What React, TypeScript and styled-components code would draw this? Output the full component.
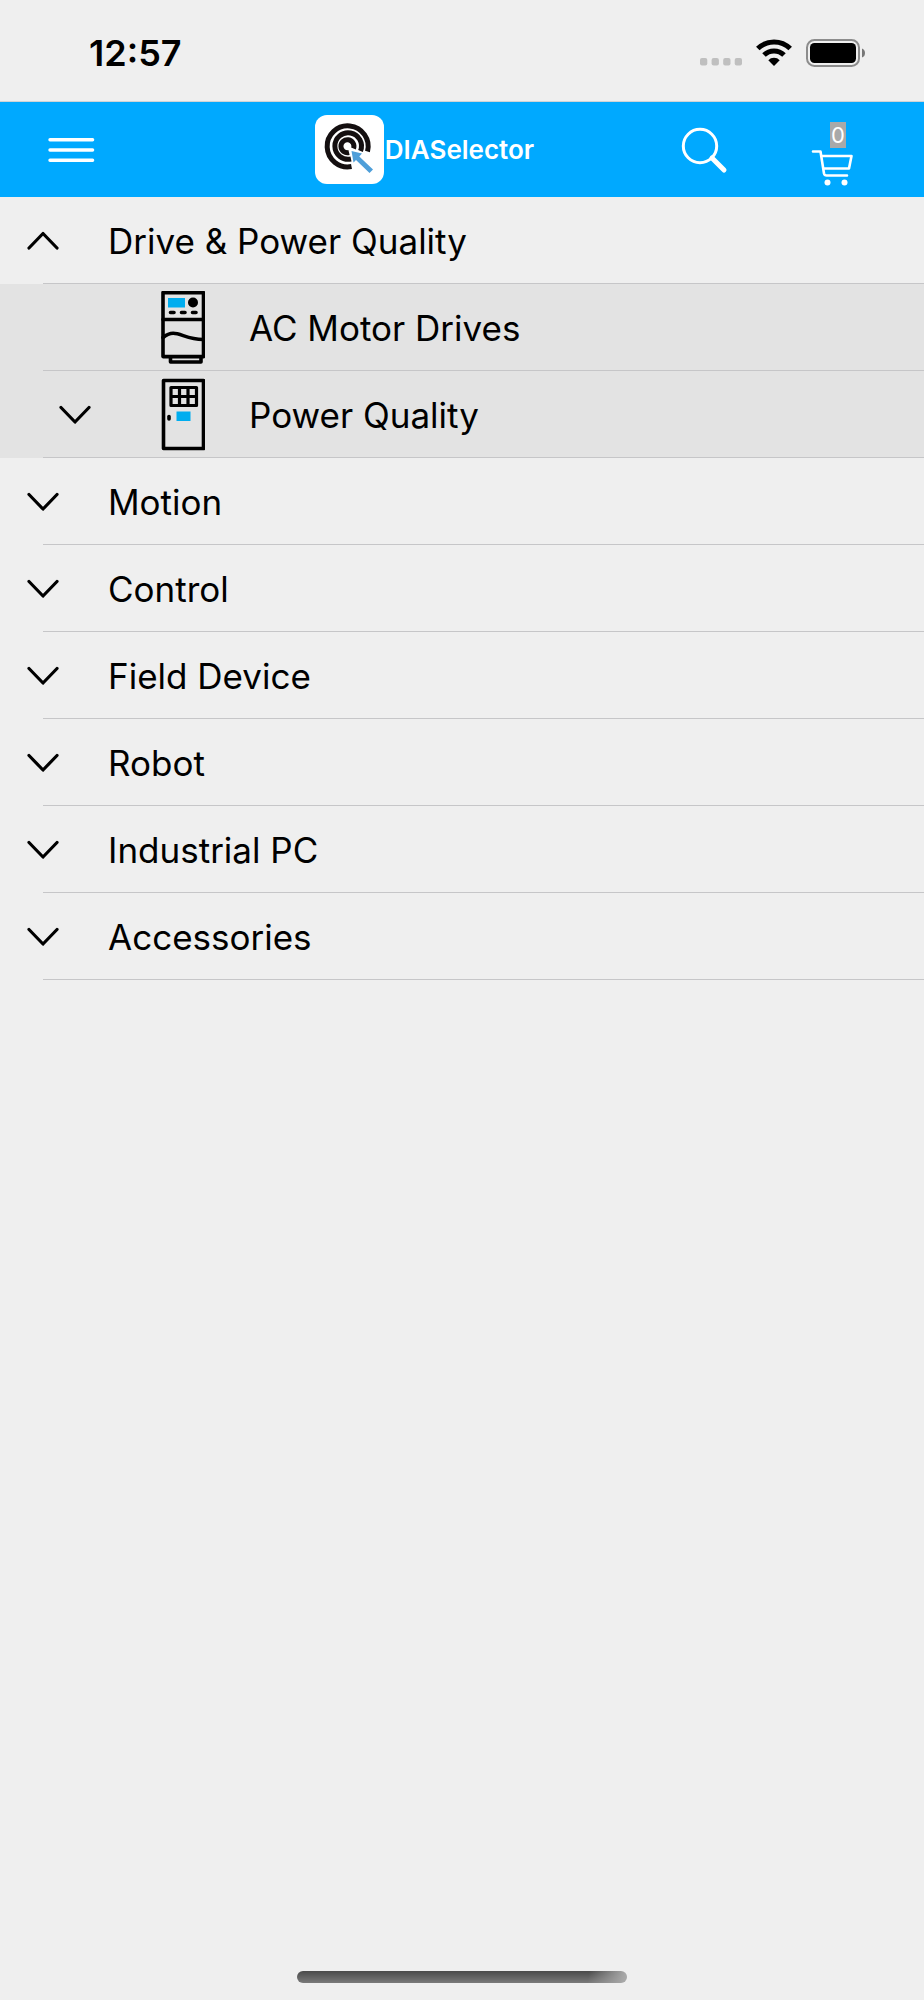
import React, { useState } from "react";
import styled, { createGlobalStyle } from "styled-components";

const GlobalStyle = createGlobalStyle`
  *, *::before, *::after { box-sizing: border-box; }
  body {
    margin: 0;
    background: #efefef;
    color: #000;
    font-family: Inter, "Liberation Sans", sans-serif;
  }
  button { font: inherit; color: inherit; }
  svg { flex: none; }
`;

const Screen = styled.div`
  min-height: 100vh;
  display: flex;
  flex-direction: column;
`;

const StatusBar = styled.div`
  height: 102px;
  padding: 0 58px 0 89px;
  border-bottom: 1px solid #cfd3d6;
  display: flex;
  align-items: center;
  justify-content: space-between;
`;

const Clock = styled.time`
  font-size: 36px;
  line-height: 44px;
  font-weight: 600;
  padding-top: 4px;
`;

const StatusIcons = styled.div`
  display: flex;
  align-items: center;
  gap: 14px;
  padding-top: 4px;
`;

const NavBar = styled.header`
  height: 95px;
  padding: 0 60px 0 39px;
  background: #00a9ff;
  color: #fff;
  display: grid;
  grid-template-columns: 1fr auto 1fr;
  align-items: center;
`;

const IconButton = styled.button`
  display: flex;
  align-items: center;
  justify-content: center;
  width: 64px;
  height: 80px;
  padding: 0;
  border: 0;
  background: none;
  cursor: pointer;
`;

const Brand = styled.div`
  display: flex;
  align-items: center;
  gap: 1px;
  padding-right: 54px;
`;

const BrandName = styled.h1`
  margin: 0;
  font-size: 26px;
  line-height: 32px;
  font-weight: 600;
`;

const Actions = styled.div`
  display: flex;
  justify-content: flex-end;
  gap: 64px;
`;

const CartButton = styled(IconButton)`
  flex-direction: column;
  padding-top: 8px;
`;

const CartCount = styled.span`
  margin-left: 12px;
  width: 16px;
  height: 26px;
  background: #a9a9a9;
  font-size: 22px;
  line-height: 26px;
  text-align: center;
`;

const List = styled.ul`
  margin: 0;
  padding: 0;
  list-style: none;
`;

const SubList = styled(List)`
  background: #e3e3e3;
`;

const Divider = styled.div`
  height: 1px;
  margin-left: 43px;
  background: #c6c6c8;
`;

const Row = styled.button<{ $nested?: boolean }>`
  display: flex;
  align-items: center;
  width: 100%;
  height: 86px;
  padding: 2px 16px 0 ${(p) => (p.$nested ? "59px" : "27px")};
  border: 0;
  background: none;
  text-align: left;
  font-size: 35px;
  line-height: 44px;
  cursor: pointer;
`;

const ChevronSlot = styled.span`
  display: flex;
  flex: none;
  width: 32px;
`;

const ProductIcon = styled.span`
  display: flex;
  flex: none;
  margin-left: 70px;
`;

const Label = styled.span<{ $nested?: boolean }>`
  margin-left: ${(p) => (p.$nested ? "44px" : "49px")};
`;

const HomeArea = styled.footer`
  margin-top: auto;
  padding: 16px 0 17px;
  display: flex;
  justify-content: center;
`;

const HomeIndicator = styled.div`
  width: 36%;
  max-width: 330px;
  height: 12px;
  border-radius: 6px;
  background:
    linear-gradient(100deg, transparent 88%, #a8a8a8 99%),
    linear-gradient(#4a4a4a, #7a7a7a);
`;

const Chevron = ({ up }: { up?: boolean }) => (
  <svg width="32" height="20" viewBox="0 0 32 20" fill="none" stroke="#000" strokeWidth="3.2" strokeLinecap="round" strokeLinejoin="round" aria-hidden="true">
    <path d={up ? "M2 17 16 2.500 30 17" : "M2 2.500 16 17 30 2.500"} />
  </svg>
);

const DriveIcon = () => (
  <svg width="44" height="74" viewBox="0 0 44 74" fill="none" stroke="#000" strokeWidth="3.6" strokeLinejoin="round" strokeLinecap="round" aria-hidden="true">
    <rect x="2" y="1.600" width="40.500" height="64" />
    <path d="M2 28.500H42M2 46.500C15 36 21 48.500 42 48.500M9.500 67V71H40V67" />
    <path d="M9.500 21.500H13M20.500 21.500H24M31.500 21.500H35" />
    <rect x="7" y="7" width="17" height="9.500" fill="#00adef" stroke="none" />
    <circle cx="32" cy="11.500" r="5" fill="#000" stroke="none" />
  </svg>
);

const PowerIcon = () => (
  <svg width="44" height="74" viewBox="0 0 44 74" fill="none" stroke="#000" strokeWidth="3.6" strokeLinejoin="round" strokeLinecap="round" aria-hidden="true">
    <rect x="2.500" y="2.500" width="40" height="68" />
    <path strokeWidth="3.2" d="M10 9.500H35.500V27.500H10ZM10 18.500H35.500M18.500 9.500V27.500M27 9.500V27.500" />
    <path d="M8 38.500V41" />
    <rect x="15.500" y="33.500" width="14" height="9.500" fill="#00adef" stroke="none" />
  </svg>
);

const LogoIcon = () => (
  <svg width="69" height="69" viewBox="0 0 69 69" fill="none" aria-hidden="true">
    <rect width="69" height="69" rx="12" fill="#fff" />
    <g stroke="#140f10" strokeWidth="5">
      <path d="M52.500 36.500A20.500 20.500 0 1 0 36.500 51.500" />
      <path d="M45.500 36A13.300 13.300 0 1 0 36 44" />
      <path d="M38.500 33.500A6.500 6.500 0 1 0 34 37.500" />
    </g>
    <path d="M36.500 36 47 38.500 44.300 41.500 58 54.500 54.500 58 41 45 38.500 47.500Z" fill="#4f9fd9" />
  </svg>
);

const MenuIcon = () => (
  <svg width="48" height="26" viewBox="0 0 48 26" stroke="#fff" strokeWidth="3.4" strokeLinecap="round" aria-hidden="true">
    <path d="M3 2.700H45.600M3 13H45.600M3 23.300H45.600" />
  </svg>
);

const SearchIcon = () => (
  <svg width="48" height="48" viewBox="0 0 48 48" fill="none" stroke="#fff" strokeWidth="3" aria-hidden="true">
    <circle cx="20" cy="20" r="16.700" />
    <path d="M32 32 44 44" strokeWidth="5" strokeLinecap="round" />
  </svg>
);

const CartIcon = () => (
  <svg width="42" height="38" viewBox="0 0 42 38" fill="none" stroke="#fff" strokeWidth="2.6" strokeLinecap="round" strokeLinejoin="round" aria-hidden="true">
    <path d="M2 3.500H9.500L13 25.500Q13.500 27.500 15.500 27.500H36M10.500 8H40.500L38 20.500H12.500" />
    <circle cx="16.500" cy="34.500" r="3" fill="#fff" stroke="none" />
    <circle cx="33.500" cy="34.500" r="3" fill="#fff" stroke="none" />
  </svg>
);

const SignalIcon = () => (
  <svg width="42" height="28" viewBox="0 0 42 28" fill="#bfbfbf" aria-hidden="true">
    {[0, 11.6, 23.2, 34.7].map((x) => (
      <rect key={x} x={x} y="19" width="7.300" height="7.600" rx="2" />
    ))}
  </svg>
);

const WifiIcon = () => (
  <svg width="36" height="28" viewBox="0 0 36 28" fill="none" stroke="#000" strokeWidth="5" aria-hidden="true">
    <path d="M1.800 9.600A23 23 0 0 1 34.200 9.600" />
    <path d="M8 16A14.200 14.200 0 0 1 28 16" />
    <path d="M12.300 21.200A8 8 0 0 1 23.700 21.200L18 27Z" fill="#000" stroke="none" />
  </svg>
);

const BatteryIcon = () => (
  <svg width="60" height="28" viewBox="0 0 60 28" aria-hidden="true">
    <rect x="1" y="1" width="52" height="26" rx="7.500" fill="none" stroke="#8c8c8c" strokeWidth="2" />
    <rect x="4" y="4" width="46" height="20" rx="4.500" fill="#000" />
    <path d="M56 9.500Q59 10.500 59 14T56 18.500Z" fill="#777" />
  </svg>
);

type Product = { name: string; icon: React.ReactNode; expandable?: boolean };
type Category = { name: string; products: Product[] };

const categories: Category[] = [
  {
    name: "Drive & Power Quality",
    products: [
      { name: "AC Motor Drives", icon: <DriveIcon /> },
      { name: "Power Quality", icon: <PowerIcon />, expandable: true },
    ],
  },
  { name: "Motion", products: [] },
  { name: "Control", products: [] },
  { name: "Field Device", products: [] },
  { name: "Robot", products: [] },
  { name: "Industrial PC", products: [] },
  { name: "Accessories", products: [] },
];

export default function App() {
  const [open, setOpen] = useState<string | null>("Drive & Power Quality");

  return (
    <Screen>
      <GlobalStyle />
      <StatusBar>
        <Clock>12:57</Clock>
        <StatusIcons>
          <SignalIcon />
          <WifiIcon />
          <BatteryIcon />
        </StatusIcons>
      </StatusBar>
      <NavBar>
        <IconButton aria-label="Menu">
          <MenuIcon />
        </IconButton>
        <Brand>
          <LogoIcon />
          <BrandName>DIASelector</BrandName>
        </Brand>
        <Actions>
          <IconButton aria-label="Search">
            <SearchIcon />
          </IconButton>
          <CartButton aria-label="Cart">
            <CartCount>0</CartCount>
            <CartIcon />
          </CartButton>
        </Actions>
      </NavBar>
      <main>
        <List>
          {categories.map((category) => {
            const expanded = open === category.name;
            return (
              <li key={category.name}>
                <Row aria-expanded={expanded} onClick={() => setOpen(expanded ? null : category.name)}>
                  <ChevronSlot>
                    <Chevron up={expanded} />
                  </ChevronSlot>
                  <Label>{category.name}</Label>
                </Row>
                <Divider />
                {expanded && category.products.length > 0 && (
                  <SubList>
                    {category.products.map((product) => (
                      <li key={product.name}>
                        <Row $nested>
                          <ChevronSlot>{product.expandable && <Chevron />}</ChevronSlot>
                          <ProductIcon>{product.icon}</ProductIcon>
                          <Label $nested>{product.name}</Label>
                        </Row>
                        <Divider />
                      </li>
                    ))}
                  </SubList>
                )}
              </li>
            );
          })}
        </List>
      </main>
      <HomeArea>
        <HomeIndicator />
      </HomeArea>
    </Screen>
  );
}
